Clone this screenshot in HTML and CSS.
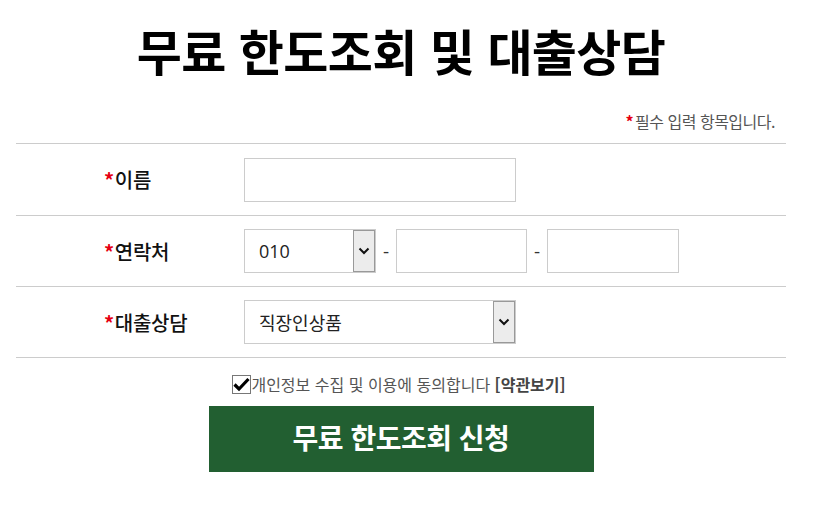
FILE: index.html
```html
<!DOCTYPE html>
<html lang="ko">
<head>
<meta charset="utf-8">
<title>무료 한도조회 및 대출상담</title>
<link rel="stylesheet" href="styles.css">
</head>
<body>
<div class="wrap">
  <h1 class="title">무료 한도조회 및 대출상담</h1>
  <p class="note"><span class="req">*</span>필수 입력 항목입니다.</p>
  <div class="form">
    <div class="row">
      <div class="label"><span class="req">*</span>이름</div>
      <div class="field">
        <input class="input w-wide" type="text">
      </div>
    </div>
    <div class="row">
      <div class="label"><span class="req">*</span>연락처</div>
      <div class="field">
        <div class="select w-phone">
          <span class="select-text">010</span>
          <span class="arrow"><svg width="12" height="8" viewBox="0 0 12 8"><path d="M1.5 1.5 L6 6 L10.5 1.5" fill="none" stroke="#111" stroke-width="2"/></svg></span>
        </div>
        <span class="dash">-</span>
        <input class="input w-phone2" type="text">
        <span class="dash">-</span>
        <input class="input w-phone" type="text">
      </div>
    </div>
    <div class="row">
      <div class="label"><span class="req">*</span>대출상담</div>
      <div class="field">
        <div class="select w-wide">
          <span class="select-text">직장인상품</span>
          <span class="arrow"><svg width="12" height="8" viewBox="0 0 12 8"><path d="M1.5 1.5 L6 6 L10.5 1.5" fill="none" stroke="#111" stroke-width="2"/></svg></span>
        </div>
      </div>
    </div>
  </div>
  <div class="agree">
    <span class="check"><svg width="17" height="15" viewBox="0 0 17 15"><path d="M1.5 7.5 L6 12 L15.5 2" fill="none" stroke="#000" stroke-width="3.2"/></svg></span>
    <span class="agree-text">개인정보 수집 및 이용에 동의합니다 <b>[약관보기]</b></span>
  </div>
  <div class="actions">
    <button class="submit" type="button">무료 한도조회 신청</button>
  </div>
</div>
</body>
</html>
```
FILE: styles.css
```css
* { box-sizing: border-box; }
html, body { margin: 0; padding: 0; background: #fff; }
body {
  font-family: "Noto Sans CJK KR", "Noto Sans", sans-serif;
  color: #111;
}
.wrap {
  width: 770px;
  margin-left: 16px;
  padding-top: 14px;
}
.title {
  margin: 0;
  text-align: center;
  font-size: 49px;
  font-weight: 700;
  line-height: 72px;
  color: #000;
  letter-spacing: -0.6px;
}
.note {
  margin: 23px 0 0;
  text-align: right;
  padding-right: 11px;
  font-size: 16px;
  line-height: 24px;
  color: #555;
  letter-spacing: -0.5px;
}
.note .req { margin-right: 2px; }
.req { color: #e60012; font-weight: 700; }
.form {
  margin-top: 10px;
  border-top: 1px solid #ccc;
}
.row {
  display: flex;
  align-items: center;
  height: 71px;
  border-bottom: 1px solid #ccc;
}
.row:first-child { height: 72px; }
.label {
  width: 228px;
  padding-left: 88px;
  font-size: 20px;
  font-weight: 500;
  color: #111;
  letter-spacing: -0.3px;
}
.label .req { margin-right: 1px; }
.field {
  display: flex;
  align-items: center;
}
.input {
  height: 44px;
  border: 1px solid #ccc;
  background: #fff;
  margin: 0;
  padding: 0 10px;
  font: inherit;
}
.w-wide { width: 272px; }
.w-phone { width: 132px; }
.w-phone2 { width: 131px; }
.dash {
  width: 20px;
  text-align: center;
  color: #333;
  font-family: "Open Sans", sans-serif;
  font-size: 19px;
}
.select {
  position: relative;
  height: 44px;
  border: 1px solid #ccc;
  background: #fff;
  display: flex;
  align-items: center;
  padding-left: 14px;
}
.select-text {
  font-family: "Open Sans", "Noto Sans CJK KR", sans-serif;
  font-size: 18px;
  color: #222;
}
.arrow {
  position: absolute;
  right: 0;
  top: 0;
  bottom: 0;
  width: 22px;
  background: #ececec;
  border: 1px solid #999;
  display: flex;
  align-items: center;
  justify-content: center;
}
.agree {
  display: flex;
  align-items: center;
  justify-content: center;
  margin-top: 16px;
  padding-right: 4px;
}
.check {
  width: 19px;
  height: 19px;
  border: 1px solid #777;
  display: flex;
  align-items: center;
  justify-content: center;
  background: #fff;
}
.agree-text {
  font-size: 16px;
  color: #555;
  letter-spacing: 0;
  line-height: 20px;
}
.agree-text b { color: #444; }
.actions {
  display: flex;
  justify-content: center;
  margin-top: 12px;
}
.submit {
  width: 385px;
  height: 66px;
  border: 0;
  background: #225f31;
  color: #fff;
  font-family: "Noto Sans CJK KR", sans-serif;
  font-size: 28px;
  font-weight: 700;
  letter-spacing: -0.5px;
  padding: 0 0 4px;
}
```
